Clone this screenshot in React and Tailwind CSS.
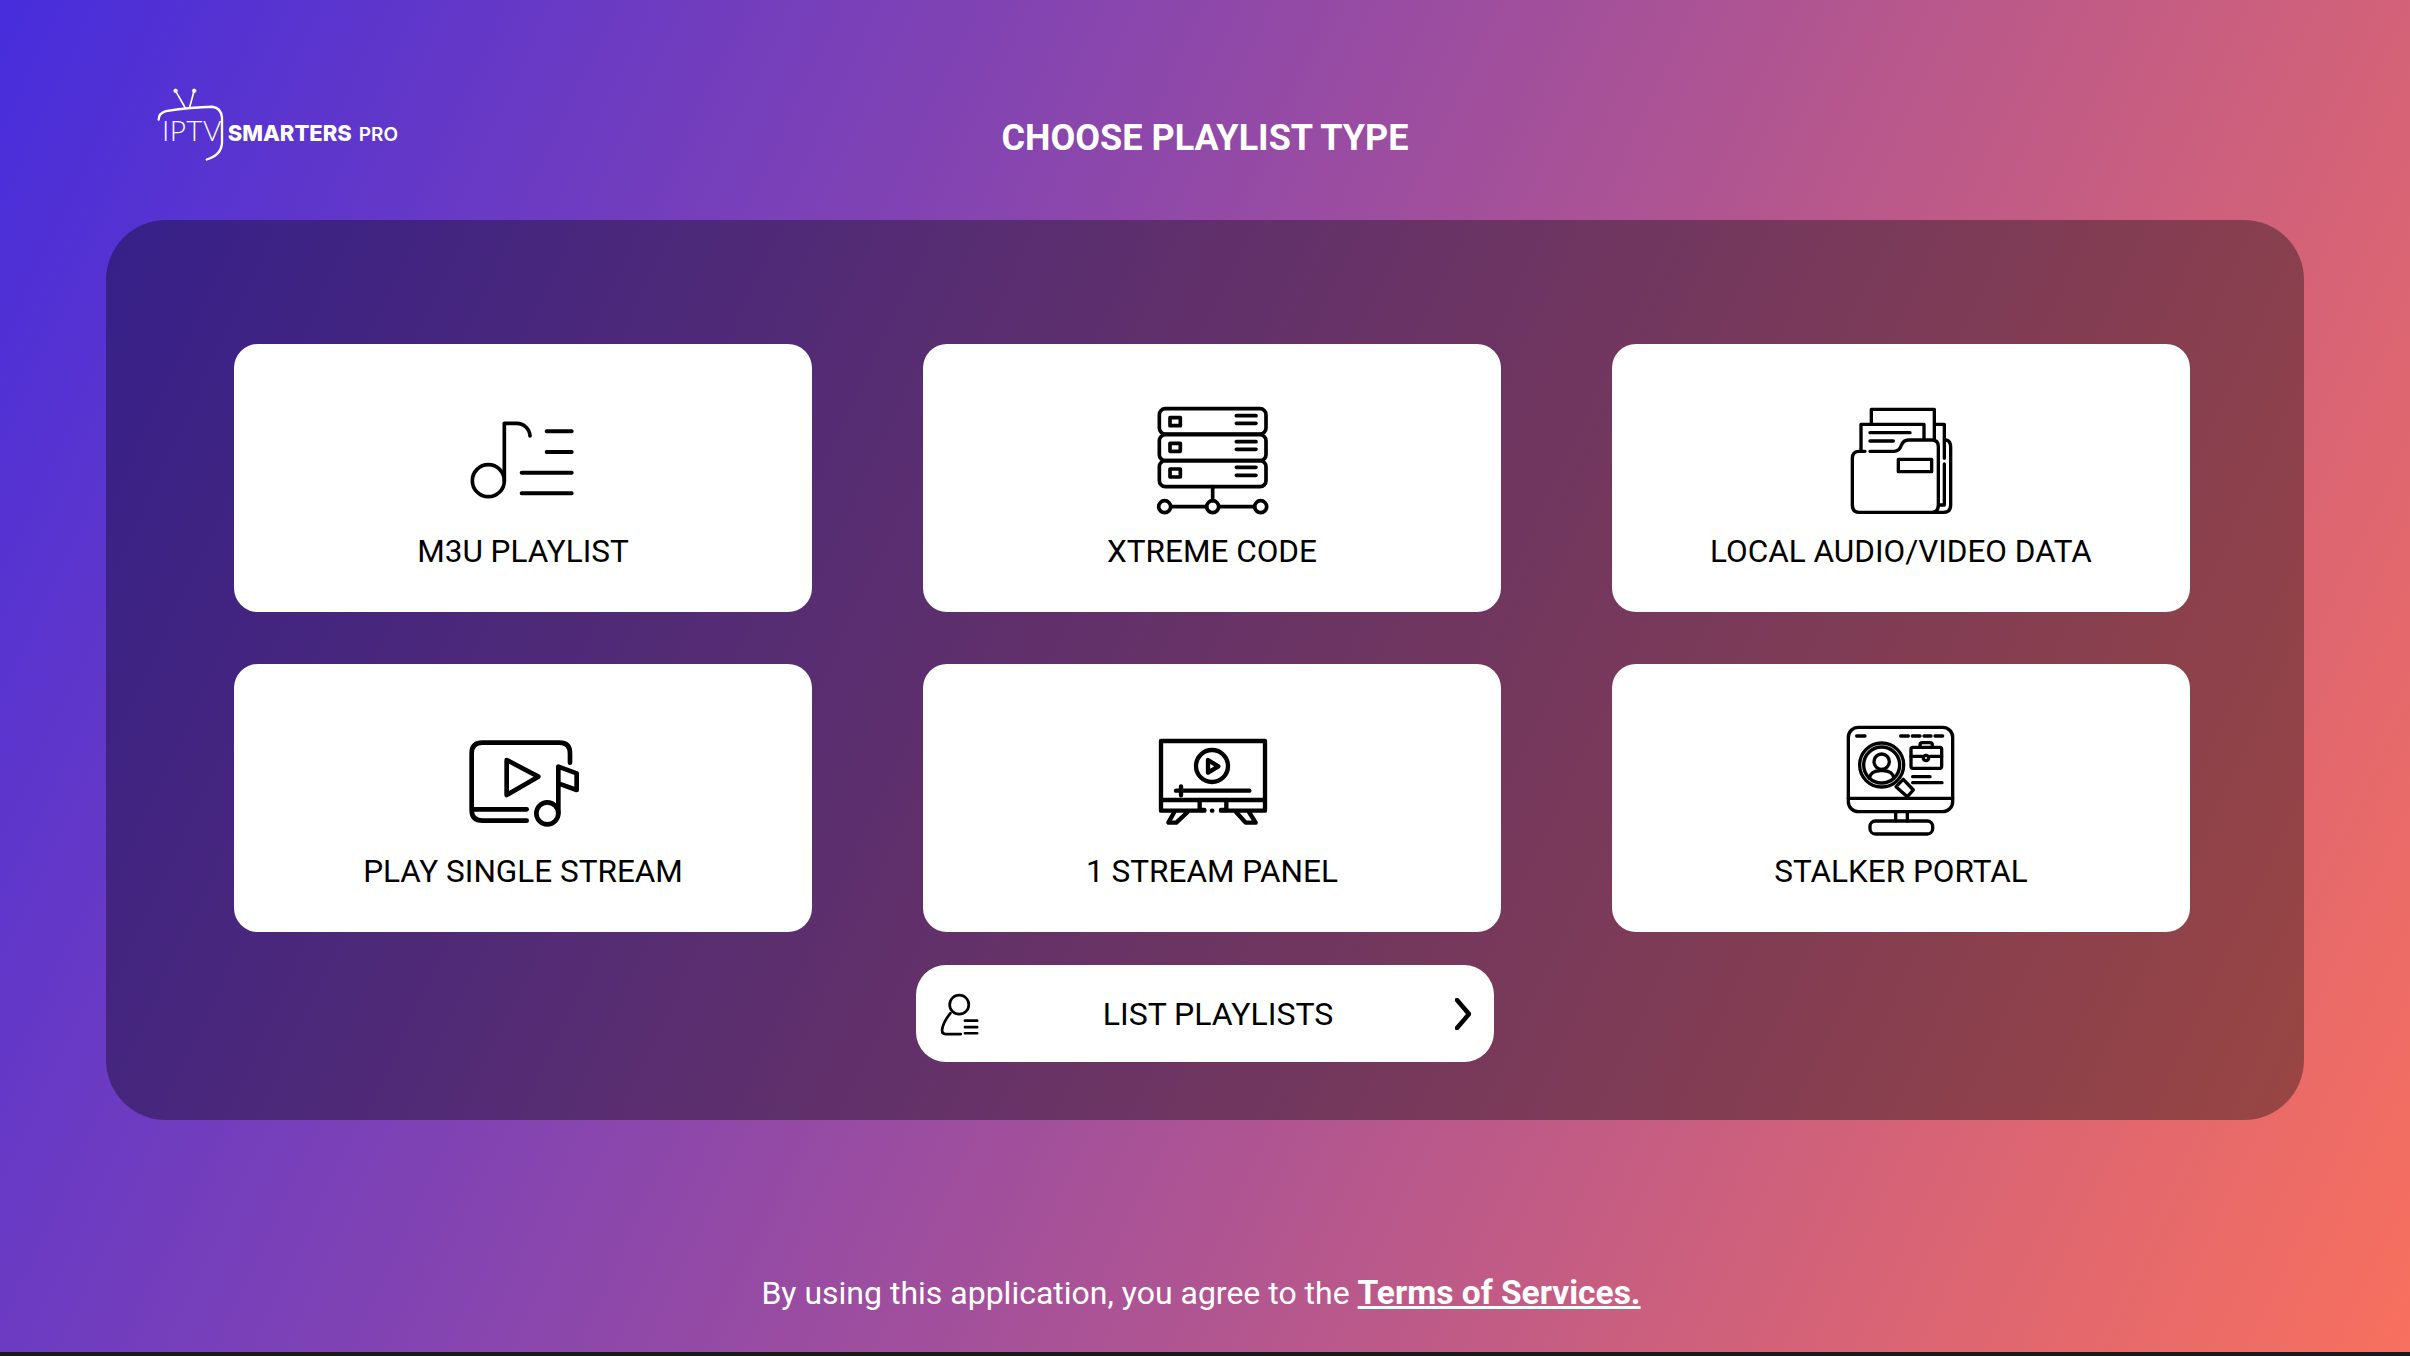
const stroke = { fill: 'none', stroke: '#000', strokeWidth: 11, strokeLinecap: 'round', strokeLinejoin: 'round' };

function M3uIcon() {
  return (
    <svg viewBox="99 42 360 336" className="w-[120px] h-[112px]" {...stroke}>
      <circle cx="175" cy="272" r="48" />
      <path d="M223 272V100H260A40 40 0 0 1 300 138" />
      <path d="M350 124H425M350 186H425M275 248H425M275 310H425" strokeWidth="12" />
    </svg>
  );
}

function ServerIcon() {
  return (
    <svg viewBox="63 42 360 336" className="w-[120px] h-[112px]" {...stroke}>
      <rect x="85" y="56" width="320" height="76" rx="18" />
      <rect x="85" y="134" width="320" height="78" rx="18" />
      <rect x="85" y="212" width="320" height="78" rx="18" />
      <rect x="117" y="83" width="31" height="24" />
      <rect x="117" y="160" width="31" height="24" />
      <rect x="117" y="237" width="31" height="24" />
      <path d="M316 77H375M316 100H375M316 155H375M316 178H375M316 232H375M316 256H375" />
      <path d="M245 290V332M119 350H227M263 350H371" />
      <circle cx="101" cy="350" r="18" />
      <circle cx="245" cy="350" r="18" />
      <circle cx="389" cy="350" r="18" />
    </svg>
  );
}

function FolderIcon() {
  return (
    <svg viewBox="63 42 360 336" className="w-[120px] h-[112px]" {...stroke} strokeWidth="10">
      <path d="M154 100V58H343V148" />
      <path d="M345 103H373V205M373 222V345H357" />
      <path d="M378 150Q392 152 392 172V345Q392 367 370 367H340" />
      <path d="M123 180V103H312V148" />
      <path d="M150 128H270M150 153H220" />
      <path d="M150 184H222Q238 184 244 166Q250 150 266 150H335Q355 150 355 170V345Q355 367 335 367H118Q97 367 97 345V205Q97 184 118 184H135" />
      <rect x="235" y="208" width="100" height="37" />
    </svg>
  );
}

function PlayIcon() {
  return (
    <svg viewBox="39 12 360 336" className="w-[120px] h-[112px]" {...stroke} strokeWidth="14">
      <path d="M360 128V100Q360 68 328 68H98Q65 68 65 100V270Q65 302 98 302H230" />
      <path d="M68 268H230" />
      <path d="M170 120L265 170L170 225Z" />
      <circle cx="292" cy="280" r="33" />
      <path d="M325 280V140L380 160V210L325 190" />
    </svg>
  );
}

function TvIcon() {
  return (
    <svg viewBox="33 12 360 336" className="w-[120px] h-[112px]" {...stroke} strokeWidth="13">
      <path d="M190 272H60V63H372V272H240" />
      <path d="M60 240H372" />
      <path d="M176 240V270H190M256 240V270H240" />
      <circle cx="213" cy="138" r="48" />
      <path d="M201 120L232 139L201 158Z" />
      <path d="M105 212H325M120 199V226" />
      <path d="M213 272H214" />
      <path d="M100 276L82 308H106L140 276M285 276L314 308H344L324 276" />
    </svg>
  );
}

function PortalIcon() {
  return (
    <svg viewBox="33 27 360 336" className="w-[120px] h-[112px]" {...stroke} strokeWidth="10">
      <rect x="55" y="37" width="313" height="253" rx="30" />
      <path d="M55 250H368M197 290V318M232 290V318" />
      <rect x="120" y="318" width="188" height="39" rx="16" />
      <path d="M80 63H105M212 63H235M247 63H270M282 63H303M315 63H338" />
      <circle cx="155" cy="150" r="66" />
      <circle cx="155" cy="150" r="54" />
      <circle cx="155" cy="140" r="23" />
      <path d="M118 190Q122 166 155 167Q188 166 192 190" />
      <path d="M198 215L220 193L250 225L232 245Z" />
      <rect x="243" y="97" width="92" height="63" rx="6" />
      <path d="M270 97V90Q270 83 277 83H300Q307 83 307 90V97M243 124H276M300 124H335" />
      <circle cx="288" cy="129" r="8" />
      <path d="M248 185H300M248 203H336" />
    </svg>
  );
}

function Logo() {
  return (
    <div className="relative w-[250px] h-[80px] text-white font-['Roboto',sans-serif]">
      <svg viewBox="85 80 205 225" className="absolute left-[-1px] top-[7px] w-[68px] h-[75px]" fill="none" stroke="white" strokeLinecap="round">
        <path d="M90 178Q90 158 112 152Q190 140 252 139Q278 142 281 172V248Q279 285 235 298" strokeWidth="7" />
        <path d="M141 91L170 142M197 91L183 142" strokeWidth="5" />
        <circle cx="141" cy="91" r="6" fill="white" />
        <circle cx="197" cy="91" r="6" fill="white" />
      </svg>
      <div className="absolute left-[4px] top-[34px] flex items-baseline">
        <span className="text-[28px] leading-[32px] font-light font-['Lato',sans-serif] tracking-[0.4px]">IPTV</span>
        <span className="ml-[6px] text-[22px] font-extrabold font-['Inter',sans-serif]">SMARTERS</span>
        <span className="ml-[7px] text-[19px] font-semibold font-['Inter',sans-serif]">PRO</span>
      </div>
    </div>
  );
}

function Card({ icon, label }) {
  return (
    <button className="h-[268px] bg-white rounded-[24px] flex flex-col items-center pt-[60px]">
      {icon}
      <span className="mt-[17px] text-[31.5px] leading-[38px] text-black">{label}</span>
    </button>
  );
}

const cards = [
  { label: 'M3U PLAYLIST', icon: <M3uIcon /> },
  { label: 'XTREME CODE', icon: <ServerIcon /> },
  { label: 'LOCAL AUDIO/VIDEO DATA', icon: <FolderIcon /> },
  { label: 'PLAY SINGLE STREAM', icon: <PlayIcon /> },
  { label: '1 STREAM PANEL', icon: <TvIcon /> },
  { label: 'STALKER PORTAL', icon: <PortalIcon /> },
];

export default function App() {
  return (
    <div className="h-screen flex flex-col overflow-hidden font-['Roboto',sans-serif]">
      <div className="flex-1 flex flex-col px-[106px] bg-[linear-gradient(115deg,#472ddc,#f8705e)]">
        {/* Header */}
        <header className="h-[220px] grid grid-cols-[1fr_auto_1fr] pt-[80px] items-start">
          <div className="pl-[52px]">
            <Logo />
          </div>
          <h1 className="mt-[33px] text-[36px] leading-[50px] font-bold text-white">CHOOSE PLAYLIST TYPE</h1>
          <div />
        </header>

        {/* Panel */}
        <main className="h-[900px] rounded-[60px] bg-black/35 flex flex-col pt-[124px] pl-[128px] pr-[114px]">
          <div className="grid grid-cols-[578px_578px_578px] gap-x-[111px] gap-y-[52px]">
            {cards.map((c) => <Card key={c.label} icon={c.icon} label={c.label} />)}
          </div>
          <button className="mt-[33px] ml-[682px] w-[578px] h-[97px] bg-white rounded-[30px] flex items-center px-[23px]">
            <svg viewBox="95 125 110 125" className="w-[42px] h-[48px]" {...stroke} strokeWidth="7">
              <circle cx="148" cy="163" r="25" />
              <path d="M125 185Q105 210 103 230Q103 240 112 240H152" />
              <path d="M163 205H195M163 222H195M163 238H195" />
            </svg>
            <span className="flex-1 text-center text-[32px] text-black">LIST PLAYLISTS</span>
            <svg viewBox="0 0 16 32" className="w-[16px] h-[32px]" {...stroke} strokeWidth="4.5">
              <path d="M2 2L14 16L2 30" />
            </svg>
          </button>
        </main>

        {/* Footer */}
        <footer className="flex-1 flex justify-center pt-[151px] text-[32px] leading-[44px] text-white pr-[8px]">
          <p>By using this application, you agree to the <a className="text-[33.5px] font-bold underline">Terms of Services.</a></p>
        </footer>
      </div>
      <div className="h-[4px] bg-[#1a1a1a]" />
    </div>
  );
}
